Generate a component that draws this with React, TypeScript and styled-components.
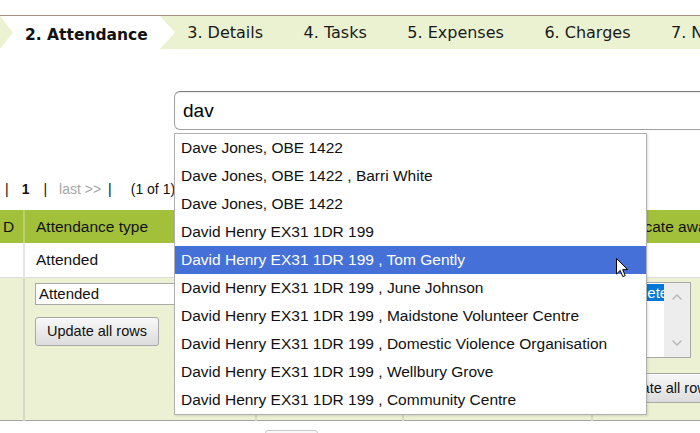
import React from "react";
import styled, { createGlobalStyle } from "styled-components";
import { ChevronUp, ChevronDown } from "lucide-react";

const GlobalStyle = createGlobalStyle`
  * { box-sizing: border-box; }
  html, body { margin: 0; padding: 0; background: #fff; overflow: hidden; }
  body { font-family: "Liberation Sans", Arial, sans-serif; color: #000; }
`;

const tabs = ["3. Details", "4. Tasks", "5. Expenses", "6. Charges", "7. Notes"];

const suggestions = [
  "Dave Jones, OBE 1422",
  "Dave Jones, OBE 1422 , Barri White",
  "Dave Jones, OBE 1422",
  "David Henry EX31 1DR 199",
  "David Henry EX31 1DR 199 , Tom Gently",
  "David Henry EX31 1DR 199 , June Johnson",
  "David Henry EX31 1DR 199 , Maidstone Volunteer Centre",
  "David Henry EX31 1DR 199 , Domestic Violence Organisation",
  "David Henry EX31 1DR 199 , Wellbury Grove",
  "David Henry EX31 1DR 199 , Community Centre",
];

export default function App() {
  return (
    <Page>
      <GlobalStyle />
      <TabBar>
        <ActiveTab>2. Attendance</ActiveTab>
        {tabs.map((t) => (
          <Tab key={t}>{t}</Tab>
        ))}
      </TabBar>

      <SearchRow>
        <SearchInput defaultValue="dav" />
        <Dropdown>
          {suggestions.map((s, i) => (
            <Suggestion key={i} $active={i === 4}>
              {s}
            </Suggestion>
          ))}
        </Dropdown>
      </SearchRow>

      <Pager>
        <PagerItem $left={5}>|</PagerItem>
        <PagerItem $left={13} $bold>1</PagerItem>
        <PagerItem $left={14}>|</PagerItem>
        <PagerItem $left={12} $muted>last &gt;&gt;</PagerItem>
        <PagerItem $left={7}>|</PagerItem>
        <PagerItem $left={19}>(1 of 1)</PagerItem>
      </Pager>

      <Table>
        <colgroup>
          <col style={{ width: 24 }} />
          <col style={{ width: 232 }} />
          <col style={{ width: 147 }} />
          <col style={{ width: 189 }} />
          <col style={{ width: 120 }} />
        </colgroup>
        <thead>
          <tr>
            <HeadCell $first>D</HeadCell>
            <HeadCell>Attendance type</HeadCell>
            <HeadCell />
            <HeadCell />
            <HeadCell>Certificate awarded</HeadCell>
          </tr>
        </thead>
        <tbody>
          <tr>
            <BodyCell />
            <BodyCell>Attended</BodyCell>
            <BodyCell />
            <BodyCell />
            <BodyCell />
          </tr>
          <EditRow>
            <EditCell />
            <EditCell>
              <Select>
                <option>Attended</option>
              </Select>
              <UpdateButton>Update all rows</UpdateButton>
            </EditCell>
            <EditCell />
            <EditCell />
            <EditCell>
              <ListBox>
                <Options>
                  <ListOption $selected>Complete</ListOption>
                  <ListOption>Partial</ListOption>
                </Options>
                <ScrollTrack>
                  <ChevronUp size={16} strokeWidth={2} />
                  <ChevronDown size={16} strokeWidth={2} />
                </ScrollTrack>
              </ListBox>
              <UpdateButton $wide>Update all rows</UpdateButton>
            </EditCell>
          </EditRow>
        </tbody>
      </Table>

      <Footer>
        <FooterButton />
      </Footer>

      <Cursor width="13" height="20" viewBox="0 0 13 20">
        <path
          d="M0.5 0.5 L0.5 16 L4.2 12.4 L6.8 18.6 L9.2 17.6 L6.7 11.6 L11.6 11.6 Z"
          fill="#fff"
          stroke="#000"
          strokeWidth="1"
          strokeLinejoin="round"
        />
      </Cursor>
    </Page>
  );
}

const Page = styled.div`
  position: relative;
  width: 700px;
  height: 433px;
  overflow: hidden;
`;

const TabBar = styled.div`
  display: flex;
  margin-top: 15px;
  height: 34px;
  border-top: 1px solid #a78e80;
  background: #ebf2d1;
  font-family: "DejaVu Sans", Verdana, sans-serif;
  font-size: 16px;
  white-space: nowrap;
`;

const ActiveTab = styled.div`
  position: relative;
  z-index: 1;
  flex: 0 0 175px;
  margin-right: -8px;
  padding: 5px 0 0 25px;
  display: flex;
  align-items: center;
  background: #fff;
  font-size: 15.5px;
  font-weight: bold;
  color: #111;
  clip-path: polygon(0 0, 160px 0, 175px 50%, 160px 100%, 0 100%, 13px 50%);
`;

const Tab = styled.div`
  display: flex;
  align-items: center;
  padding: 0 20.25px;
  color: #1a1a1a;
`;

const SearchRow = styled.div`
  position: relative;
  margin: 42px 0 0 174px;
`;

const SearchInput = styled.input`
  display: block;
  width: 560px;
  height: 39px;
  padding: 0 8px;
  border: 1px solid #a0a0a0;
  border-top-color: #7c7c7c;
  border-radius: 6px;
  font-family: "Liberation Sans", Arial, sans-serif;
  font-size: 19px;
  color: #000;
  outline: none;
  box-shadow: inset 0 1px 1px rgba(0, 0, 0, 0.08);
`;

const Dropdown = styled.div`
  position: absolute;
  z-index: 5;
  top: 42px;
  left: 0;
  width: 473px;
  background: #fff;
  border: 1px solid #b0b0b0;
  box-shadow: 1px 1px 2px rgba(0, 0, 0, 0.12);
`;

const Suggestion = styled.div<{ $active?: boolean }>`
  height: 28px;
  line-height: 28px;
  padding-left: 6px;
  font-size: 15.5px;
  white-space: nowrap;
  background: ${(p) => (p.$active ? "#4470d8" : "#fff")};
  color: ${(p) => (p.$active ? "#fff" : "#111")};
`;

const Pager = styled.div`
  display: flex;
  padding: 49px 0 11px;
  line-height: 20px;
  font-size: 14px;
  white-space: nowrap;
`;

const PagerItem = styled.span<{ $left: number; $bold?: boolean; $muted?: boolean }>`
  margin-left: ${(p) => p.$left}px;
  font-weight: ${(p) => (p.$bold ? "bold" : "normal")};
  color: ${(p) => (p.$muted ? "#a6a6a6" : "#111")};
`;

const Table = styled.table`
  width: 712px;
  table-layout: fixed;
  border-collapse: collapse;
  border-bottom: 1px solid #a3a3a3;
  font-size: 15.5px;
`;

const HeadCell = styled.th<{ $first?: boolean }>`
  height: 33px;
  padding: 0 ${(p) => (p.$first ? "3px" : "11px")};
  background: #a3c03b;
  border-right: 2px solid #bccf78;
  font-weight: normal;
  text-align: left;
  white-space: nowrap;
  overflow: hidden;
  color: #111;
`;

const BodyCell = styled.td`
  height: 34px;
  padding: 0 11px;
  border-right: 2px solid #e6e6e6;
  border-bottom: 1px solid #dcdcdc;
  white-space: nowrap;
  color: #111;
`;

const EditRow = styled.tr`
  background: #ebf1d2;
`;

const EditCell = styled.td`
  height: 143px;
  padding: 5px 10px 0;
  vertical-align: top;
  border-right: 2px solid #d5d9c6;
`;

const Select = styled.select`
  display: block;
  width: 220px;
  height: 22px;
  padding: 0 3px;
  border: 1px solid #a9a9a9;
  background: #fff;
  font-family: "Liberation Sans", Arial, sans-serif;
  font-size: 15px;
  color: #111;
  appearance: none;
`;

const UpdateButton = styled.button<{ $wide?: boolean }>`
  display: block;
  margin-top: ${(p) => (p.$wide ? "15px" : "12px")};
  height: ${(p) => (p.$wide ? "30px" : "29px")};
  padding: 0 11px;
  border: 1px solid #a8a8a8;
  border-radius: 3px;
  background: linear-gradient(#f8f8f8, #dcdcdc);
  font-family: "Liberation Sans", Arial, sans-serif;
  font-size: 14.5px;
  color: #111;
  white-space: nowrap;
`;

const ListBox = styled.div`
  display: flex;
  width: 88px;
  height: 76px;
  margin-top: -1px;
  border: 1px solid #a9a9a9;
  background: #fff;
`;

const Options = styled.div`
  flex: 1;
  overflow: hidden;
  padding-top: 1px;
`;

const ListOption = styled.div<{ $selected?: boolean }>`
  height: 17px;
  line-height: 17px;
  padding-left: 0;
  font-size: 15px;
  white-space: nowrap;
  background: ${(p) => (p.$selected ? "#0078d7" : "transparent")};
  color: ${(p) => (p.$selected ? "#fff" : "#111")};
`;

const ScrollTrack = styled.div`
  flex: 0 0 26px;
  display: flex;
  flex-direction: column;
  justify-content: space-between;
  align-items: center;
  padding: 6px 0 6px;
  background: #ededed;
  color: #b5b5b5;
`;

const Footer = styled.div`
  padding: 9px 0 0 265px;
`;

const FooterButton = styled.div`
  width: 53px;
  height: 24px;
  border: 1px solid #c8c8c8;
  border-radius: 3px;
  background: linear-gradient(#fafafa, #e4e4e4);
`;

const Cursor = styled.svg`
  position: absolute;
  z-index: 10;
  left: 616px;
  top: 258px;
`;
